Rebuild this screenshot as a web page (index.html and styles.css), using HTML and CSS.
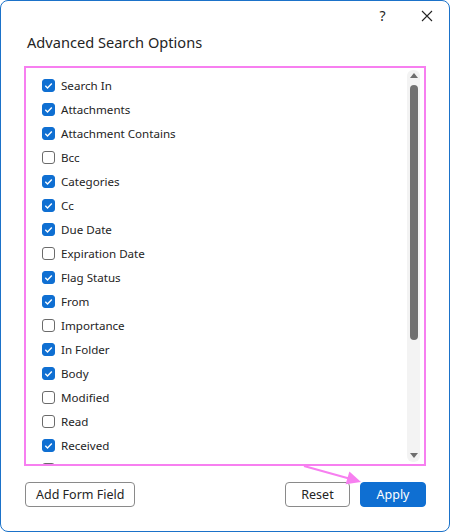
FILE: index.html
```html
<!DOCTYPE html>
<html>
<head>
<meta charset="utf-8">
<link rel="stylesheet" href="styles.css">
</head>
<body>
<div class="window">
  <div class="titlebar">
    <div class="tb-btn help">?</div>
    <div class="tb-btn close">
      <svg width="12" height="12" viewBox="0 0 12 12"><path d="M1 1L11 11M11 1L1 11" stroke="#242424" stroke-width="1.1" fill="none"/></svg>
    </div>
  </div>
  <div class="title">Advanced Search Options</div>
  <div class="listbox">
    <div class="list">
      <div class="row"><span class="cb on"><svg viewBox="0 0 13 13"><path d="M3.3 6.8L5.5 8.9L9.8 4.4" /></svg></span>Search In</div>
      <div class="row"><span class="cb on"><svg viewBox="0 0 13 13"><path d="M3.3 6.8L5.5 8.9L9.8 4.4" /></svg></span>Attachments</div>
      <div class="row"><span class="cb on"><svg viewBox="0 0 13 13"><path d="M3.3 6.8L5.5 8.9L9.8 4.4" /></svg></span>Attachment Contains</div>
      <div class="row"><span class="cb"></span>Bcc</div>
      <div class="row"><span class="cb on"><svg viewBox="0 0 13 13"><path d="M3.3 6.8L5.5 8.9L9.8 4.4" /></svg></span>Categories</div>
      <div class="row"><span class="cb on"><svg viewBox="0 0 13 13"><path d="M3.3 6.8L5.5 8.9L9.8 4.4" /></svg></span>Cc</div>
      <div class="row"><span class="cb on"><svg viewBox="0 0 13 13"><path d="M3.3 6.8L5.5 8.9L9.8 4.4" /></svg></span>Due Date</div>
      <div class="row"><span class="cb"></span>Expiration Date</div>
      <div class="row"><span class="cb on"><svg viewBox="0 0 13 13"><path d="M3.3 6.8L5.5 8.9L9.8 4.4" /></svg></span>Flag Status</div>
      <div class="row"><span class="cb on"><svg viewBox="0 0 13 13"><path d="M3.3 6.8L5.5 8.9L9.8 4.4" /></svg></span>From</div>
      <div class="row"><span class="cb"></span>Importance</div>
      <div class="row"><span class="cb on"><svg viewBox="0 0 13 13"><path d="M3.3 6.8L5.5 8.9L9.8 4.4" /></svg></span>In Folder</div>
      <div class="row"><span class="cb on"><svg viewBox="0 0 13 13"><path d="M3.3 6.8L5.5 8.9L9.8 4.4" /></svg></span>Body</div>
      <div class="row"><span class="cb"></span>Modified</div>
      <div class="row"><span class="cb"></span>Read</div>
      <div class="row"><span class="cb on"><svg viewBox="0 0 13 13"><path d="M3.3 6.8L5.5 8.9L9.8 4.4" /></svg></span>Received</div>
      <div class="row"><span class="cb"></span></div>
    </div>
    <div class="scrollbar">
      <div class="arrow up"></div>
      <div class="thumb-area"><div class="thumb"></div></div>
      <div class="arrow down"></div>
    </div>
  </div>
  <div class="buttons">
    <button class="btn">Add Form Field</button>
    <div class="spacer"></div>
    <button class="btn reset">Reset</button>
    <button class="btn primary">Apply</button>
  </div>
  <svg class="pointer" width="450" height="532" viewBox="0 0 450 532">
    <path d="M304 466L349 478.5" stroke="#f77ff0" stroke-width="2.2" fill="none"/>
    <path d="M361 482L345.6 484.2L349.4 471.6Z" fill="#f77ff0"/>
  </svg>
</div>
</body>
</html>
```

FILE: styles.css
```css
html, body {
  margin: 0;
  padding: 0;
  background: #ffffff;
}
body {
  font-family: "Noto Sans", "Open Sans", sans-serif;
  color: #242424;
}
.window {
  position: relative;
  width: 450px;
  height: 532px;
  box-sizing: border-box;
  border: 1px solid #1b72c9;
  border-radius: 8px;
  background: #ffffff;
  display: flex;
  flex-direction: column;
  overflow: hidden;
}
.titlebar {
  height: 29px;
  display: flex;
  justify-content: flex-end;
  align-items: center;
}
.tb-btn {
  width: 45px;
  height: 29px;
  display: flex;
  align-items: center;
  justify-content: center;
}
.help {
  font-size: 14px;
  padding-bottom: 1px;
  box-sizing: border-box;
}
.close {
  width: 44px;
}
.title {
  height: 24px;
  line-height: 24px;
  font-size: 14.6px;
  padding-left: 26px;
  margin-bottom: 12px;
}
.listbox {
  margin: 0 23px;
  height: 400px;
  box-sizing: border-box;
  border: 2px solid #f77ff0;
  display: flex;
  overflow: hidden;
}
.list {
  flex: 1;
  padding-top: 5px;
  overflow: hidden;
}
.row {
  height: 24px;
  display: flex;
  align-items: center;
  font-size: 11.6px;
  padding-left: 16px;
}
.cb {
  width: 13px;
  height: 13px;
  box-sizing: border-box;
  border: 1px solid #6b6b6b;
  border-radius: 3px;
  margin-right: 6px;
  background: #fff;
  flex: none;
}
.cb.on {
  background: #0f6fd2;
  border-color: #0f6fd2;
}
.cb svg {
  display: block;
  width: 13px;
  height: 13px;
  margin: -1px;
}
.cb svg path {
  stroke: #ffffff;
  stroke-width: 1.4;
  fill: none;
}
.scrollbar {
  width: 13px;
  margin: 2px 4px 2px 0;
  background: #f3f3f3;
  border-radius: 6px;
  display: flex;
  flex-direction: column;
  align-items: center;
}
.arrow {
  width: 0;
  height: 0;
  border-left: 4px solid transparent;
  border-right: 4px solid transparent;
  flex: none;
}
.arrow.up {
  border-bottom: 5px solid #6e6e6e;
  margin-top: 3px;
}
.arrow.down {
  border-top: 5px solid #6e6e6e;
  margin-bottom: 4px;
}
.thumb-area {
  flex: 1;
  width: 100%;
  padding-top: 7px;
  display: flex;
  justify-content: center;
}
.thumb {
  width: 8px;
  height: 255px;
  background: #707070;
  border-radius: 4px;
  margin-left: 1px;
}
.buttons {
  display: flex;
  padding: 16px 23px 0 24px;
  gap: 10px;
}
.spacer {
  flex: 1;
}
.btn {
  height: 25px;
  box-sizing: border-box;
  border: 1px solid #8a8a8a;
  border-radius: 4px;
  background: #ffffff;
  font-family: "Noto Sans", "Open Sans", sans-serif;
  font-size: 12.5px;
  color: #242424;
  padding: 0 10px;
  line-height: 23px;
}
.reset {
  width: 65px;
}
.primary {
  width: 66px;
  background: #0f6fd2;
  border-color: #0f6fd2;
  color: #ffffff;
}
.pointer {
  position: absolute;
  left: -1px;
  top: -1px;
  pointer-events: none;
}
```
